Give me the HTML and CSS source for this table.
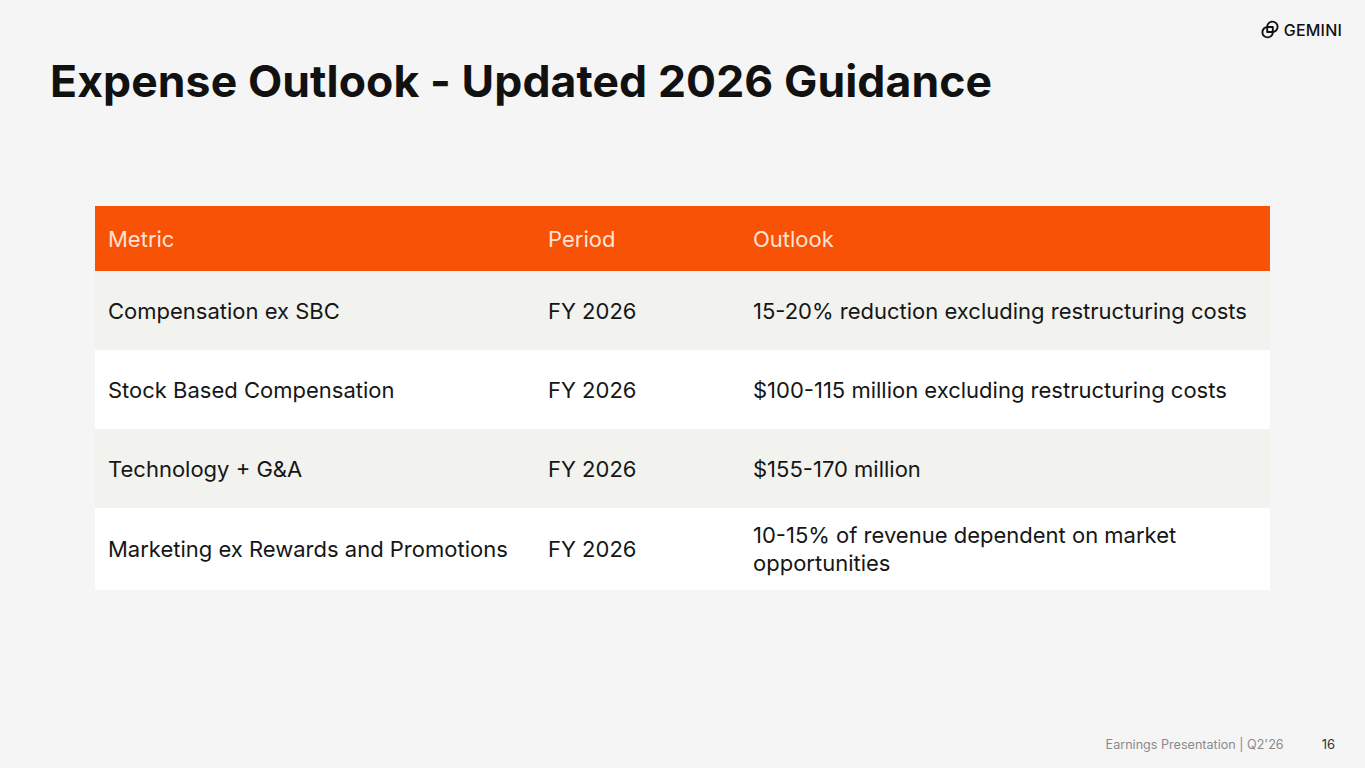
FILE: index.html
```html
<!DOCTYPE html>
<html lang="en">
<head>
<meta charset="utf-8">
<title>Expense Outlook - Updated 2026 Guidance</title>
<link rel="stylesheet" href="styles.css">
</head>
<body>
<div class="slide">
  <header class="top">
    <h1 class="title">Expense Outlook - Updated 2026 Guidance</h1>
    <div class="logo">
      <svg class="logo-mark" viewBox="0 0 18 19" width="18" height="19" aria-hidden="true">
        <path d="M6.2 7.2 V6.8 A5.2 5.2 0 0 1 11.4 1.6 A5.2 5.2 0 0 1 16.6 6.8 A5.2 5.2 0 0 1 11.4 12 H6.2 Z" fill="none" stroke="#111" stroke-width="1.9" stroke-linejoin="round"/>
        <path d="M11.8 12 V12.2 A5.2 5.2 0 0 1 6.6 17.4 A5.2 5.2 0 0 1 1.4 12.2 A5.2 5.2 0 0 1 6.6 7 H11.8 Z" fill="none" stroke="#111" stroke-width="1.9" stroke-linejoin="round"/>
      </svg>
      <span class="logo-text">GEMINI</span>
    </div>
  </header>
  <main class="content">
    <table class="outlook">
      <colgroup>
        <col class="c1"><col class="c2"><col class="c3">
      </colgroup>
      <thead>
        <tr><th>Metric</th><th>Period</th><th>Outlook</th></tr>
      </thead>
      <tbody>
        <tr class="alt"><td>Compensation ex SBC</td><td>FY 2026</td><td>15-20% reduction excluding restructuring costs</td></tr>
        <tr><td>Stock Based Compensation</td><td>FY 2026</td><td>$100-115 million excluding restructuring costs</td></tr>
        <tr class="alt"><td>Technology + G&amp;A</td><td>FY 2026</td><td>$155-170 million</td></tr>
        <tr class="last"><td>Marketing ex Rewards and Promotions</td><td>FY 2026</td><td>10-15% of revenue dependent on market<br>opportunities</td></tr>
      </tbody>
    </table>
  </main>
  <footer class="foot">
    <span class="foot-label">Earnings Presentation | Q2'26</span>
    <span class="foot-page">16</span>
  </footer>
</div>
</body>
</html>
```
FILE: styles.css
```css
html, body {
  margin: 0;
  padding: 0;
}
body {
  background: #f5f5f5;
  font-family: Inter, "Liberation Sans", Arial, sans-serif;
  color: #141414;
}
.slide {
  width: 1365px;
  height: 768px;
  display: flex;
  flex-direction: column;
  box-sizing: border-box;
  overflow: hidden;
}
.top {
  display: flex;
  justify-content: space-between;
  align-items: flex-start;
  padding: 0 23px 0 50px;
}
.title {
  margin: 53px 0 0 0;
  font-size: 44.5px;
  font-weight: 700;
  line-height: 56px;
  letter-spacing: 0.1px;
  color: #111;
}
.logo {
  display: flex;
  align-items: center;
  gap: 5px;
  margin-top: 20px;
}
.logo-mark {
  display: block;
}
.logo-text {
  font-size: 16px;
  font-weight: 500;
  letter-spacing: 0.2px;
  color: #111;
  line-height: 18px;
}
.content {
  flex: 1;
  padding: 97px 95px 0 95px;
}
.outlook {
  width: 1175px;
  border-collapse: collapse;
  table-layout: fixed;
  font-size: 22px;
  line-height: 28px;
}
.c1 { width: 440px; }
.c2 { width: 205px; }
.c3 { width: 530px; }
.outlook th {
  background: #f85206;
  color: #fde3d6;
  font-weight: 400;
  text-align: left;
  height: 65px;
  padding: 0 13px;
  vertical-align: middle;
}
.outlook td {
  height: 79px;
  padding: 0 13px;
  vertical-align: middle;
  background: #ffffff;
  color: #161616;
}
.outlook tr.alt td {
  background: #f2f2ee;
}
.outlook tr.last td {
  height: 82px;
}
.foot {
  display: flex;
  justify-content: flex-end;
  align-items: baseline;
  gap: 38px;
  padding: 0 30px 16px 0;
}
.foot-label {
  font-size: 12.6px;
  color: #8a8a8a;
}
.foot-page {
  font-size: 13px;
  color: #333;
}
```
